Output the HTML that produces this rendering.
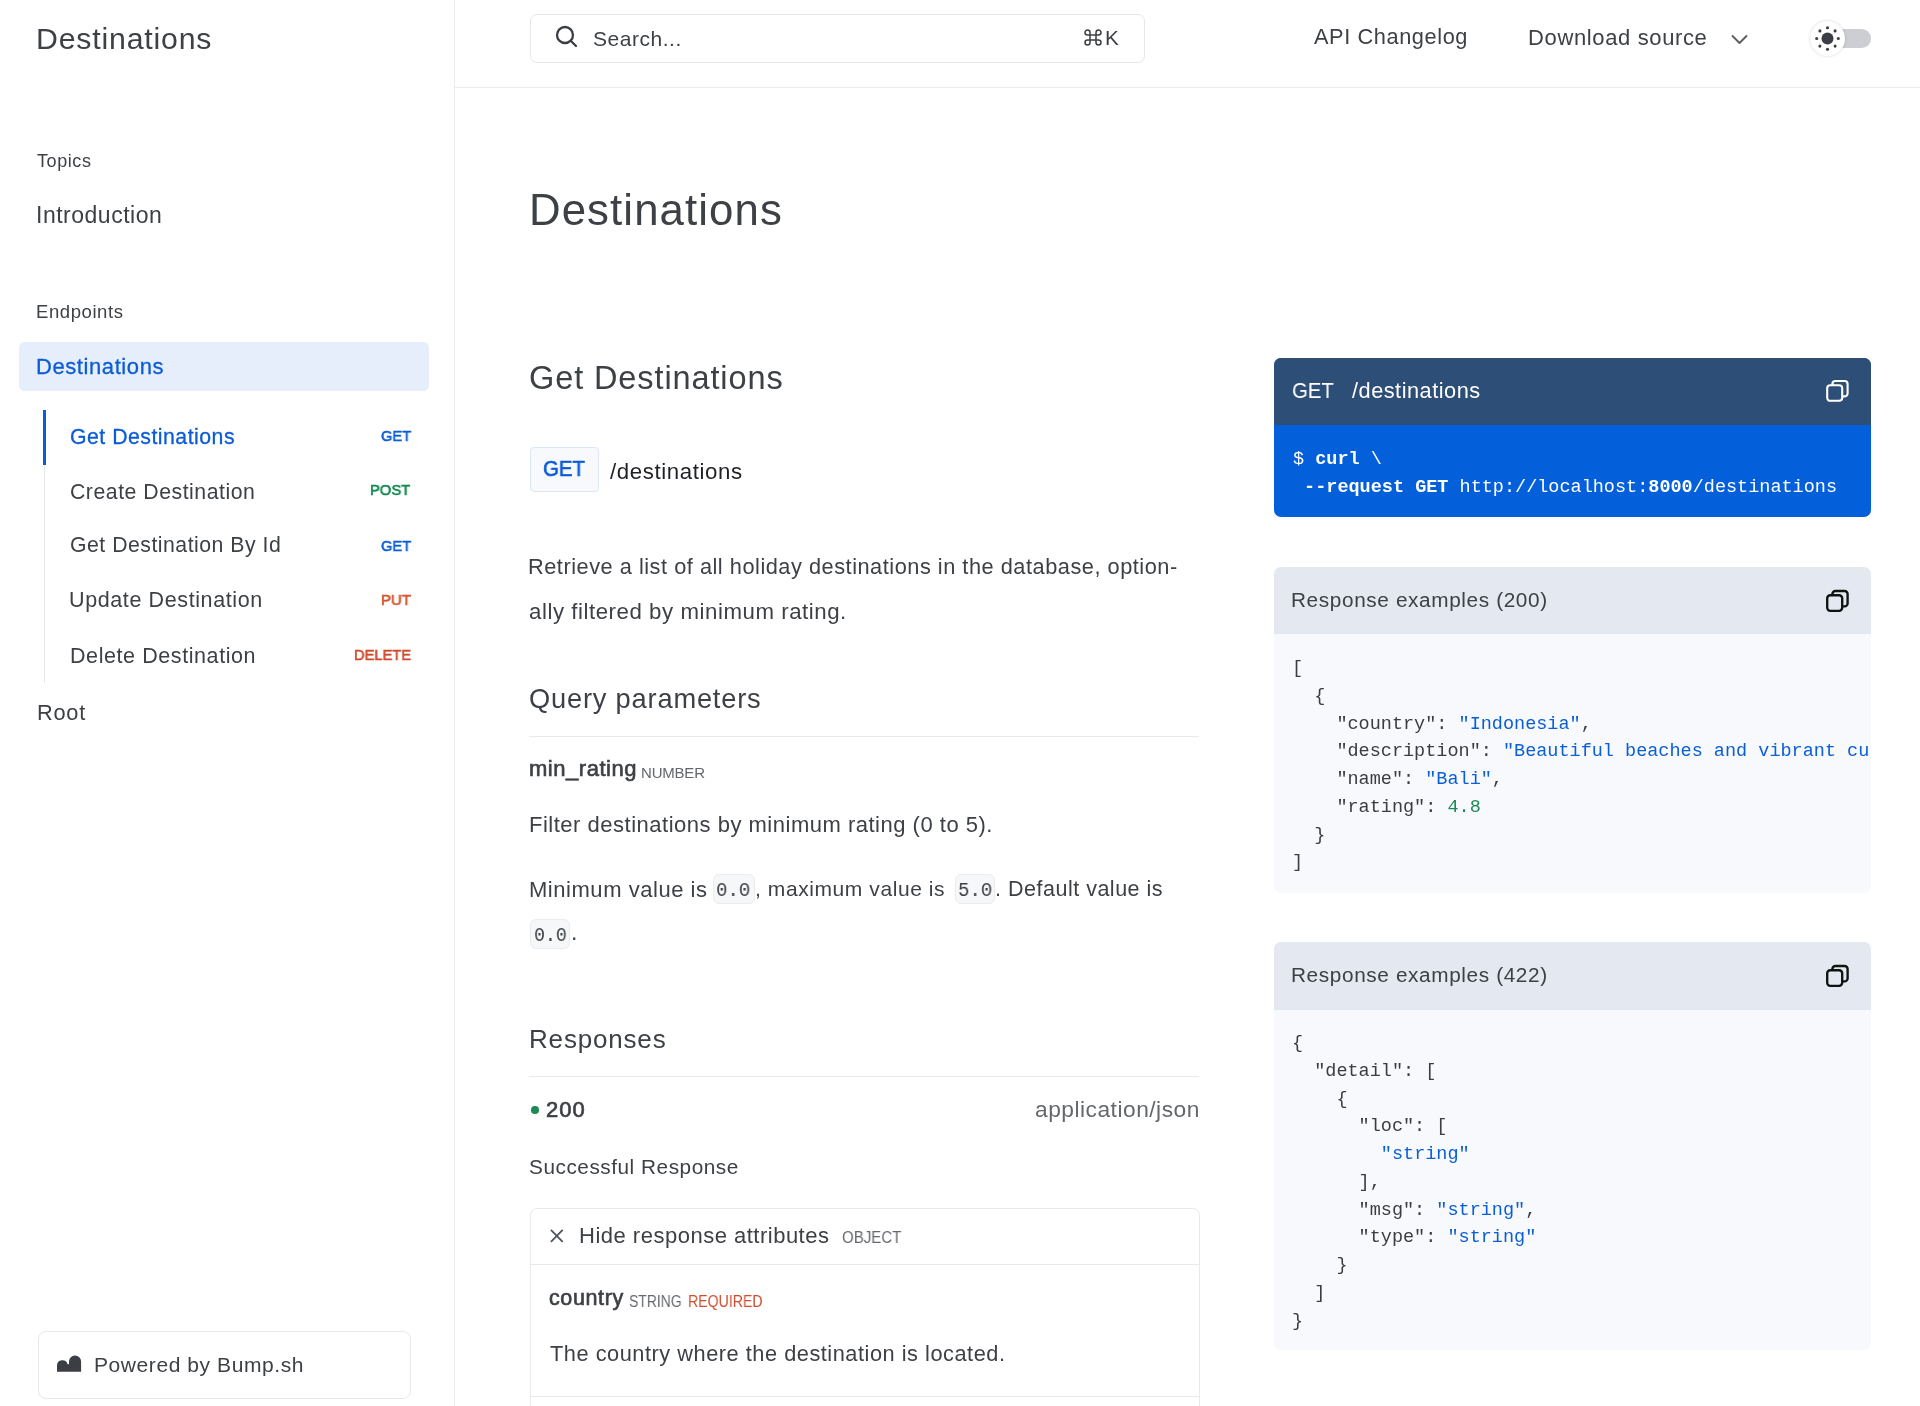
<!DOCTYPE html>
<html><head><meta charset="utf-8"><title>Destinations</title>
<style>
*{box-sizing:border-box;margin:0;padding:0}
html,body{width:1920px;height:1406px;overflow:hidden;background:#fff}
body{position:relative;font-family:"Liberation Sans",sans-serif;color:#3d4045}
.t{position:absolute;white-space:pre;will-change:transform}
.abs{position:absolute}
pre{will-change:transform;font-family:"Liberation Mono",monospace;font-size:18.5px;line-height:27.75px;color:#3b3d40;white-space:pre;margin:0}
.s{color:#0b5fd4} .n{color:#1e8857}
</style></head><body>
<!-- sidebar -->
<div class="abs" style="left:454px;top:0;width:1px;height:1406px;background:#ececed"></div>
<div class="abs" style="left:455px;top:87px;width:1465px;height:1px;background:#ececed"></div>
<div class="abs" style="left:18.5px;top:342px;width:410.6px;height:49.4px;background:#e6eefb;border-radius:5.5px"></div>
<div class="abs" style="left:44px;top:464.5px;width:1px;height:218px;background:#e6e7e9"></div>
<div class="abs" style="left:43px;top:410px;width:3px;height:54.5px;background:#0b5cd6"></div>
<div class="abs" style="left:37.5px;top:1330.5px;width:373px;height:68.5px;border:1.5px solid #e8e8ea;border-radius:8px"></div>
<svg class="abs" style="left:57px;top:1355px" width="25" height="17" viewBox="0 0 25 17"><path fill="#3b3e43" d="M0 16.7V10.4A5.4 5.4 0 0 1 10.6 9.2L12 9.2V6.5A6.05 6.05 0 0 1 24.1 6.5V16.7Z"/></svg>
<!-- header -->
<div class="abs" style="left:529.5px;top:14px;width:615px;height:48.5px;border:1.5px solid #e6e7e9;border-radius:7px"></div>
<svg class="abs" style="left:554px;top:24px" width="24" height="24" viewBox="0 0 24 24" fill="none" stroke="#3b3e43" stroke-width="2.3" stroke-linecap="round"><circle cx="11" cy="11" r="8"/><path d="M17 17l5 5"/></svg>
<svg class="abs" style="left:1084px;top:29px" width="18" height="17" viewBox="0 0 18 17" fill="none" stroke="#3b3e43" stroke-width="1.5"><path d="M6 6H12V11H6Z M6 6V3.5A2.5 2.5 0 1 0 3.5 6H6 M12 6H14.5A2.5 2.5 0 1 0 12 3.5V6 M12 11V13.5A2.5 2.5 0 1 0 14.5 11H12 M6 11H3.5A2.5 2.5 0 1 0 6 13.5V11"/></svg>
<svg class="abs" style="left:1730px;top:33px" width="19" height="12" viewBox="0 0 19 12" fill="none" stroke="#5a5d62" stroke-width="1.9" stroke-linecap="round" stroke-linejoin="round"><path d="M2.5 3L9.5 10L16.5 3"/></svg>
<div class="abs" style="left:1815px;top:29px;width:56px;height:18.5px;border-radius:9.25px;background:#ccced3"></div>
<div class="abs" style="left:1810px;top:20.5px;width:35px;height:35px;border-radius:50%;background:#fff;box-shadow:0 0 3px rgba(0,0,0,0.18)"></div>
<svg class="abs" style="left:1810px;top:20.5px" width="35" height="35" viewBox="0 0 35 35"><circle cx="17.5" cy="17.5" r="6" fill="#3b3e43"/>
<g fill="#3b3e43"><circle cx="17.5" cy="6.7" r="1.55"/><circle cx="17.5" cy="28.3" r="1.55"/><circle cx="6.7" cy="17.5" r="1.55"/><circle cx="28.3" cy="17.5" r="1.55"/><circle cx="9.9" cy="9.9" r="1.55"/><circle cx="25.1" cy="9.9" r="1.55"/><circle cx="9.9" cy="25.1" r="1.55"/><circle cx="25.1" cy="25.1" r="1.55"/></g></svg>
<!-- main -->
<div class="abs" style="left:529.5px;top:447px;width:69.5px;height:44.5px;background:#f7f9fc;border:1.5px solid #dce6f6;border-radius:4px"></div>
<div class="abs" style="left:529px;top:736px;width:670px;height:1px;background:#e9e9ea"></div>
<div class="abs" style="left:713.3px;top:874.4px;width:41.4px;height:30px;background:#f6f7f9;border:1.5px solid #ebecee;border-radius:6px"></div>
<div class="abs" style="left:954.7px;top:874.4px;width:40.6px;height:30px;background:#f6f7f9;border:1.5px solid #ebecee;border-radius:6px"></div>
<div class="abs" style="left:529.9px;top:919.4px;width:40.6px;height:29.6px;background:#f6f7f9;border:1.5px solid #ebecee;border-radius:6px"></div>
<div class="abs" style="left:529px;top:1076px;width:670px;height:1px;background:#e9e9ea"></div>
<div class="abs" style="left:531px;top:1106px;width:7.6px;height:7.6px;border-radius:50%;background:#1e8a58"></div>
<div class="abs" style="left:529.5px;top:1207.5px;width:670px;height:260px;border:1.5px solid #e8e9eb;border-radius:7px"></div>
<div class="abs" style="left:530px;top:1263.5px;width:669px;height:1.5px;background:#e8e9eb"></div>
<div class="abs" style="left:530px;top:1395.7px;width:669px;height:1.5px;background:#e8e9eb"></div>
<svg class="abs" style="left:549px;top:1228px" width="16" height="16" viewBox="0 0 16 16" fill="none" stroke="#505357" stroke-width="1.8" stroke-linecap="round"><path d="M2.4 2.4L13.2 13.4M13.2 2.4L2.4 13.4"/></svg>
<!-- right panel -->
<div class="abs" style="left:1274px;top:357.8px;width:596.5px;height:159.4px;border-radius:7px;overflow:hidden;background:#045fdb">
  <div style="height:67.2px;background:#2d4e76"></div>
</div>
<div class="abs" style="left:1825px;top:379px"><svg width="24" height="24" viewBox="0 0 24 24" fill="none" stroke="#ffffff" stroke-width="2.1"><rect x="2.2" y="6.2" width="15" height="15.6" rx="3"/><path d="M7.4 6.2V5a3 3 0 0 1 3-3h9.2a3 3 0 0 1 3 3v9.4a3 3 0 0 1-3 3h-2.4"/></svg></div>
<pre class="abs" style="left:1293.3px;top:445.60px;color:#fff"><span style="font-weight:normal">$ </span><b>curl</b> \
 <b>--request GET</b> http://localhost:<b>8000</b>/destinations</pre>
<div class="abs" style="left:1274px;top:566.7px;width:596.5px;height:326px;border-radius:7px;overflow:hidden;background:#f8f9fc">
  <div style="height:67.2px;background:#e3e8f1"></div>
  <pre style="position:absolute;left:18.1px;top:88.35px">[
  {
    "country": <span class="s">"Indonesia"</span>,
    "description": <span class="s">"Beautiful beaches and vibrant culture"</span>,
    "name": <span class="s">"Bali"</span>,
    "rating": <span class="n">4.8</span>
  }
]</pre>
</div>
<div class="abs" style="left:1825px;top:588.8px"><svg width="24" height="24" viewBox="0 0 24 24" fill="none" stroke="#111214" stroke-width="2.35"><rect x="2.2" y="6.2" width="15" height="15.6" rx="3"/><path d="M7.4 6.2V5a3 3 0 0 1 3-3h9.2a3 3 0 0 1 3 3v9.4a3 3 0 0 1-3 3h-2.4"/></svg></div>
<div class="abs" style="left:1274px;top:942px;width:596.5px;height:408px;border-radius:7px;overflow:hidden;background:#f8f9fc">
  <div style="height:67.7px;background:#e3e8f1"></div>
  <pre style="position:absolute;left:18.1px;top:88.35px">{
  "detail": [
    {
      "loc": [
        <span class="s">"string"</span>
      ],
      "msg": <span class="s">"string"</span>,
      "type": <span class="s">"string"</span>
    }
  ]
}</pre>
</div>
<div class="abs" style="left:1825px;top:964.3px"><svg width="24" height="24" viewBox="0 0 24 24" fill="none" stroke="#111214" stroke-width="2.35"><rect x="2.2" y="6.2" width="15" height="15.6" rx="3"/><path d="M7.4 6.2V5a3 3 0 0 1 3-3h9.2a3 3 0 0 1 3 3v9.4a3 3 0 0 1-3 3h-2.4"/></svg></div>
<div id="sb_title" class="t" style="left:36.36px;top:16.37px;font-size:30.25px;line-height:45px;font-weight:normal;font-family:'Liberation Sans', sans-serif;letter-spacing:0.816px;color:#3d4045;">Destinations</div>
<div id="sb_topics" class="t" style="left:36.78px;top:148.31px;font-size:18.0px;line-height:27px;font-weight:normal;font-family:'Liberation Sans', sans-serif;letter-spacing:0.580px;color:#3d4045;">Topics</div>
<div id="sb_intro" class="t" style="left:35.72px;top:197.98px;font-size:23.0px;line-height:34px;font-weight:normal;font-family:'Liberation Sans', sans-serif;letter-spacing:0.509px;color:#3d4045;">Introduction</div>
<div id="sb_endp" class="t" style="left:36.10px;top:297.80px;font-size:18.5px;line-height:28px;font-weight:normal;font-family:'Liberation Sans', sans-serif;letter-spacing:0.584px;color:#3d4045;">Endpoints</div>
<div id="sb_dest" class="t" style="left:36.25px;top:350.23px;font-size:22.0px;line-height:33px;font-weight:normal;font-family:'Liberation Sans', sans-serif;letter-spacing:0.580px;color:#0b5cd6;-webkit-text-stroke:0.3px #0b5cd6;">Destinations</div>
<div id="sb_i1" class="t" style="left:69.70px;top:420.79px;font-size:21.25px;line-height:32px;font-weight:normal;font-family:'Liberation Sans', sans-serif;letter-spacing:0.495px;color:#0b5cd6;-webkit-text-stroke:0.3px #0b5cd6;">Get Destinations</div>
<div id="sb_i2" class="t" style="left:69.83px;top:475.59px;font-size:21.25px;line-height:32px;font-weight:normal;font-family:'Liberation Sans', sans-serif;letter-spacing:0.518px;color:#3d4045;">Create Destination</div>
<div id="sb_i3" class="t" style="left:69.50px;top:529.35px;font-size:21.25px;line-height:32px;font-weight:normal;font-family:'Liberation Sans', sans-serif;letter-spacing:0.495px;color:#3d4045;">Get Destination By Id</div>
<div id="sb_i4" class="t" style="left:69.23px;top:584.05px;font-size:21.5px;line-height:32px;font-weight:normal;font-family:'Liberation Sans', sans-serif;letter-spacing:0.610px;color:#3d4045;">Update Destination</div>
<div id="sb_i5" class="t" style="left:69.50px;top:639.50px;font-size:21.5px;line-height:32px;font-weight:normal;font-family:'Liberation Sans', sans-serif;letter-spacing:0.581px;color:#3d4045;">Delete Destination</div>
<div id="sb_m1" class="t" style="left:380.84px;top:424.09px;font-size:15.5px;line-height:23px;font-weight:normal;font-family:'Liberation Sans', sans-serif;letter-spacing:0.000px;color:#0b5cd6;-webkit-text-stroke:0.65px #0b5cd6;transform:scaleX(0.9463);transform-origin:0 0;">GET</div>
<div id="sb_m2" class="t" style="left:370.36px;top:478.09px;font-size:15.5px;line-height:23px;font-weight:normal;font-family:'Liberation Sans', sans-serif;letter-spacing:0.000px;color:#128a50;-webkit-text-stroke:0.65px #128a50;transform:scaleX(0.9526);transform-origin:0 0;">POST</div>
<div id="sb_m3" class="t" style="left:380.84px;top:533.92px;font-size:15.5px;line-height:23px;font-weight:normal;font-family:'Liberation Sans', sans-serif;letter-spacing:0.000px;color:#0b5cd6;-webkit-text-stroke:0.65px #0b5cd6;transform:scaleX(0.9463);transform-origin:0 0;">GET</div>
<div id="sb_m4" class="t" style="left:381.04px;top:588.32px;font-size:15.5px;line-height:23px;font-weight:normal;font-family:'Liberation Sans', sans-serif;letter-spacing:0.000px;color:#d4552e;-webkit-text-stroke:0.65px #d4552e;transform:scaleX(0.9702);transform-origin:0 0;">PUT</div>
<div id="sb_m5" class="t" style="left:353.62px;top:642.73px;font-size:15.5px;line-height:23px;font-weight:normal;font-family:'Liberation Sans', sans-serif;letter-spacing:0.000px;color:#cc4a2c;-webkit-text-stroke:0.65px #cc4a2c;transform:scaleX(0.9456);transform-origin:0 0;">DELETE</div>
<div id="sb_root" class="t" style="left:36.80px;top:696.31px;font-size:21.75px;line-height:33px;font-weight:normal;font-family:'Liberation Sans', sans-serif;letter-spacing:0.767px;color:#3d4045;">Root</div>
<div id="sb_pow" class="t" style="left:94.40px;top:1348.83px;font-size:21.0px;line-height:32px;font-weight:normal;font-family:'Liberation Sans', sans-serif;letter-spacing:0.576px;color:#3d4045;">Powered by Bump.sh</div>
<div id="h_search" class="t" style="left:592.50px;top:22.67px;font-size:21.0px;line-height:32px;font-weight:normal;font-family:'Liberation Sans', sans-serif;letter-spacing:0.534px;color:#3d4045;">Search...</div>
<div id="h_k" class="t" style="left:1104.75px;top:21.91px;font-size:20.75px;line-height:31px;font-weight:normal;font-family:'Liberation Sans', sans-serif;letter-spacing:0.000px;color:#3d4045;">K</div>
<div id="h_api" class="t" style="left:1314.15px;top:20.26px;font-size:21.75px;line-height:33px;font-weight:normal;font-family:'Liberation Sans', sans-serif;letter-spacing:0.592px;color:#3d4045;">API Changelog</div>
<div id="h_dl" class="t" style="left:1528.00px;top:21.43px;font-size:22.0px;line-height:33px;font-weight:normal;font-family:'Liberation Sans', sans-serif;letter-spacing:0.632px;color:#3d4045;">Download source</div>
<div id="m_h1" class="t" style="left:529.32px;top:176.75px;font-size:43.75px;line-height:66px;font-weight:normal;font-family:'Liberation Sans', sans-serif;letter-spacing:1.091px;color:#3d4045;">Destinations</div>
<div id="m_h2" class="t" style="left:529.32px;top:353.78px;font-size:32.5px;line-height:49px;font-weight:normal;font-family:'Liberation Sans', sans-serif;letter-spacing:0.893px;color:#3d4045;">Get Destinations</div>
<div id="m_get" class="t" style="left:542.75px;top:451.51px;font-size:21.75px;line-height:33px;font-weight:normal;font-family:'Liberation Sans', sans-serif;letter-spacing:0.000px;color:#0b5cd6;-webkit-text-stroke:0.65px #0b5cd6;transform:scaleX(0.9349);transform-origin:0 0;">GET</div>
<div id="m_path" class="t" style="left:610.35px;top:454.74px;font-size:22.25px;line-height:33px;font-weight:normal;font-family:'Liberation Sans', sans-serif;letter-spacing:0.598px;color:#1f2124;">/destinations</div>
<div id="m_d1" class="t" style="left:528.11px;top:549.66px;font-size:21.75px;line-height:33px;font-weight:normal;font-family:'Liberation Sans', sans-serif;letter-spacing:0.522px;color:#3d4045;">Retrieve a list of all holiday destinations in the database, option-</div>
<div id="m_d2" class="t" style="left:528.77px;top:594.68px;font-size:22.25px;line-height:33px;font-weight:normal;font-family:'Liberation Sans', sans-serif;letter-spacing:0.542px;color:#3d4045;">ally filtered by minimum rating.</div>
<div id="m_qp" class="t" style="left:529.00px;top:678.35px;font-size:27.25px;line-height:41px;font-weight:normal;font-family:'Liberation Sans', sans-serif;letter-spacing:0.808px;color:#3d4045;">Query parameters</div>
<div id="m_minr" class="t" style="left:528.55px;top:752.34px;font-size:22.0px;line-height:33px;font-weight:normal;font-family:'Liberation Sans', sans-serif;letter-spacing:0.536px;color:#3d4045;-webkit-text-stroke:0.65px #3d4045;">min_rating</div>
<div id="m_num" class="t" style="left:640.95px;top:761.76px;font-size:15.0px;line-height:22px;font-weight:normal;font-family:'Liberation Sans', sans-serif;letter-spacing:-0.200px;color:#64676c;">NUMBER</div>
<div id="m_filter" class="t" style="left:528.55px;top:808.17px;font-size:22.0px;line-height:33px;font-weight:normal;font-family:'Liberation Sans', sans-serif;letter-spacing:0.507px;color:#3d4045;">Filter destinations by minimum rating (0 to 5).</div>
<div id="m_min1" class="t" style="left:528.75px;top:872.63px;font-size:22.0px;line-height:33px;font-weight:normal;font-family:'Liberation Sans', sans-serif;letter-spacing:0.540px;color:#3d4045;">Minimum value is</div>
<div id="m_min2" class="t" style="left:755.12px;top:872.58px;font-size:21.0px;line-height:32px;font-weight:normal;font-family:'Liberation Sans', sans-serif;letter-spacing:0.581px;color:#3d4045;">, maximum value is</div>
<div id="m_min3" class="t" style="left:995.45px;top:873.30px;font-size:21.5px;line-height:32px;font-weight:normal;font-family:'Liberation Sans', sans-serif;letter-spacing:0.509px;color:#3d4045;">. Default value is</div>
<div id="m_min4" class="t" style="left:570.74px;top:914.83px;font-size:23px;line-height:34px;font-weight:normal;font-family:'Liberation Sans', sans-serif;letter-spacing:0.000px;color:#3d4045;">.</div>
<div id="m_c1" class="t" style="left:716.34px;top:874.79px;font-size:20.5px;line-height:31px;font-weight:normal;font-family:'Liberation Mono', monospace;letter-spacing:0.000px;color:#3d4045;transform:scaleX(0.9309);transform-origin:0 0;">0.0</div>
<div id="m_c2" class="t" style="left:958.34px;top:874.79px;font-size:20.5px;line-height:31px;font-weight:normal;font-family:'Liberation Mono', monospace;letter-spacing:0.000px;color:#3d4045;transform:scaleX(0.9309);transform-origin:0 0;">5.0</div>
<div id="m_c3" class="t" style="left:533.83px;top:919.59px;font-size:20.5px;line-height:31px;font-weight:normal;font-family:'Liberation Mono', monospace;letter-spacing:0.000px;color:#3d4045;transform:scaleX(0.8931);transform-origin:0 0;">0.0</div>
<div id="m_resp" class="t" style="left:529.02px;top:1020.00px;font-size:26.0px;line-height:39px;font-weight:normal;font-family:'Liberation Sans', sans-serif;letter-spacing:0.822px;color:#3d4045;">Responses</div>
<div id="m_200" class="t" style="left:546.48px;top:1092.63px;font-size:22.0px;line-height:33px;font-weight:normal;font-family:'Liberation Sans', sans-serif;letter-spacing:1.025px;color:#3d4045;-webkit-text-stroke:0.65px #3d4045;">200</div>
<div id="m_json" class="t" style="left:1035.25px;top:1091.57px;font-size:22.75px;line-height:34px;font-weight:normal;font-family:'Liberation Sans', sans-serif;letter-spacing:0.502px;color:#64676c;">application/json</div>
<div id="m_succ" class="t" style="left:528.90px;top:1150.86px;font-size:20.75px;line-height:31px;font-weight:normal;font-family:'Liberation Sans', sans-serif;letter-spacing:0.543px;color:#3d4045;">Successful Response</div>
<div id="m_hide" class="t" style="left:579.20px;top:1218.94px;font-size:22.0px;line-height:33px;font-weight:normal;font-family:'Liberation Sans', sans-serif;letter-spacing:0.500px;color:#3d4045;">Hide response attributes</div>
<div id="m_obj" class="t" style="left:841.76px;top:1224.93px;font-size:16.25px;line-height:24px;font-weight:normal;font-family:'Liberation Sans', sans-serif;letter-spacing:0.000px;color:#64676c;transform:scaleX(0.9254);transform-origin:0 0;">OBJECT</div>
<div id="m_country" class="t" style="left:549.38px;top:1282.05px;font-size:21.5px;line-height:32px;font-weight:normal;font-family:'Liberation Sans', sans-serif;letter-spacing:0.612px;color:#3d4045;-webkit-text-stroke:0.65px #3d4045;">country</div>
<div id="m_str" class="t" style="left:629.36px;top:1288.73px;font-size:16.25px;line-height:24px;font-weight:normal;font-family:'Liberation Sans', sans-serif;letter-spacing:0.000px;color:#64676c;transform:scaleX(0.8571);transform-origin:0 0;">STRING</div>
<div id="m_req" class="t" style="left:687.55px;top:1288.73px;font-size:16.25px;line-height:24px;font-weight:normal;font-family:'Liberation Sans', sans-serif;letter-spacing:0.000px;color:#cf4b2d;transform:scaleX(0.8694);transform-origin:0 0;">REQUIRED</div>
<div id="m_cdesc" class="t" style="left:549.90px;top:1337.26px;font-size:21.75px;line-height:33px;font-weight:normal;font-family:'Liberation Sans', sans-serif;letter-spacing:0.531px;color:#3d4045;">The country where the destination is located.</div>
<div id="r_get" class="t" style="left:1292.13px;top:373.95px;font-size:22.5px;line-height:34px;font-weight:normal;font-family:'Liberation Sans', sans-serif;letter-spacing:0.000px;color:#ffffff;transform:scaleX(0.9031);transform-origin:0 0;">GET</div>
<div id="r_path" class="t" style="left:1352.30px;top:373.71px;font-size:21.75px;line-height:33px;font-weight:normal;font-family:'Liberation Sans', sans-serif;letter-spacing:0.502px;color:#ffffff;">/destinations</div>
<div id="r_ex200" class="t" style="left:1291.36px;top:583.66px;font-size:20.75px;line-height:31px;font-weight:normal;font-family:'Liberation Sans', sans-serif;letter-spacing:0.632px;color:#3d4045;">Response examples (200)</div>
<div id="r_ex422" class="t" style="left:1291.36px;top:958.66px;font-size:20.75px;line-height:31px;font-weight:normal;font-family:'Liberation Sans', sans-serif;letter-spacing:0.632px;color:#3d4045;">Response examples (422)</div>
</body></html>
